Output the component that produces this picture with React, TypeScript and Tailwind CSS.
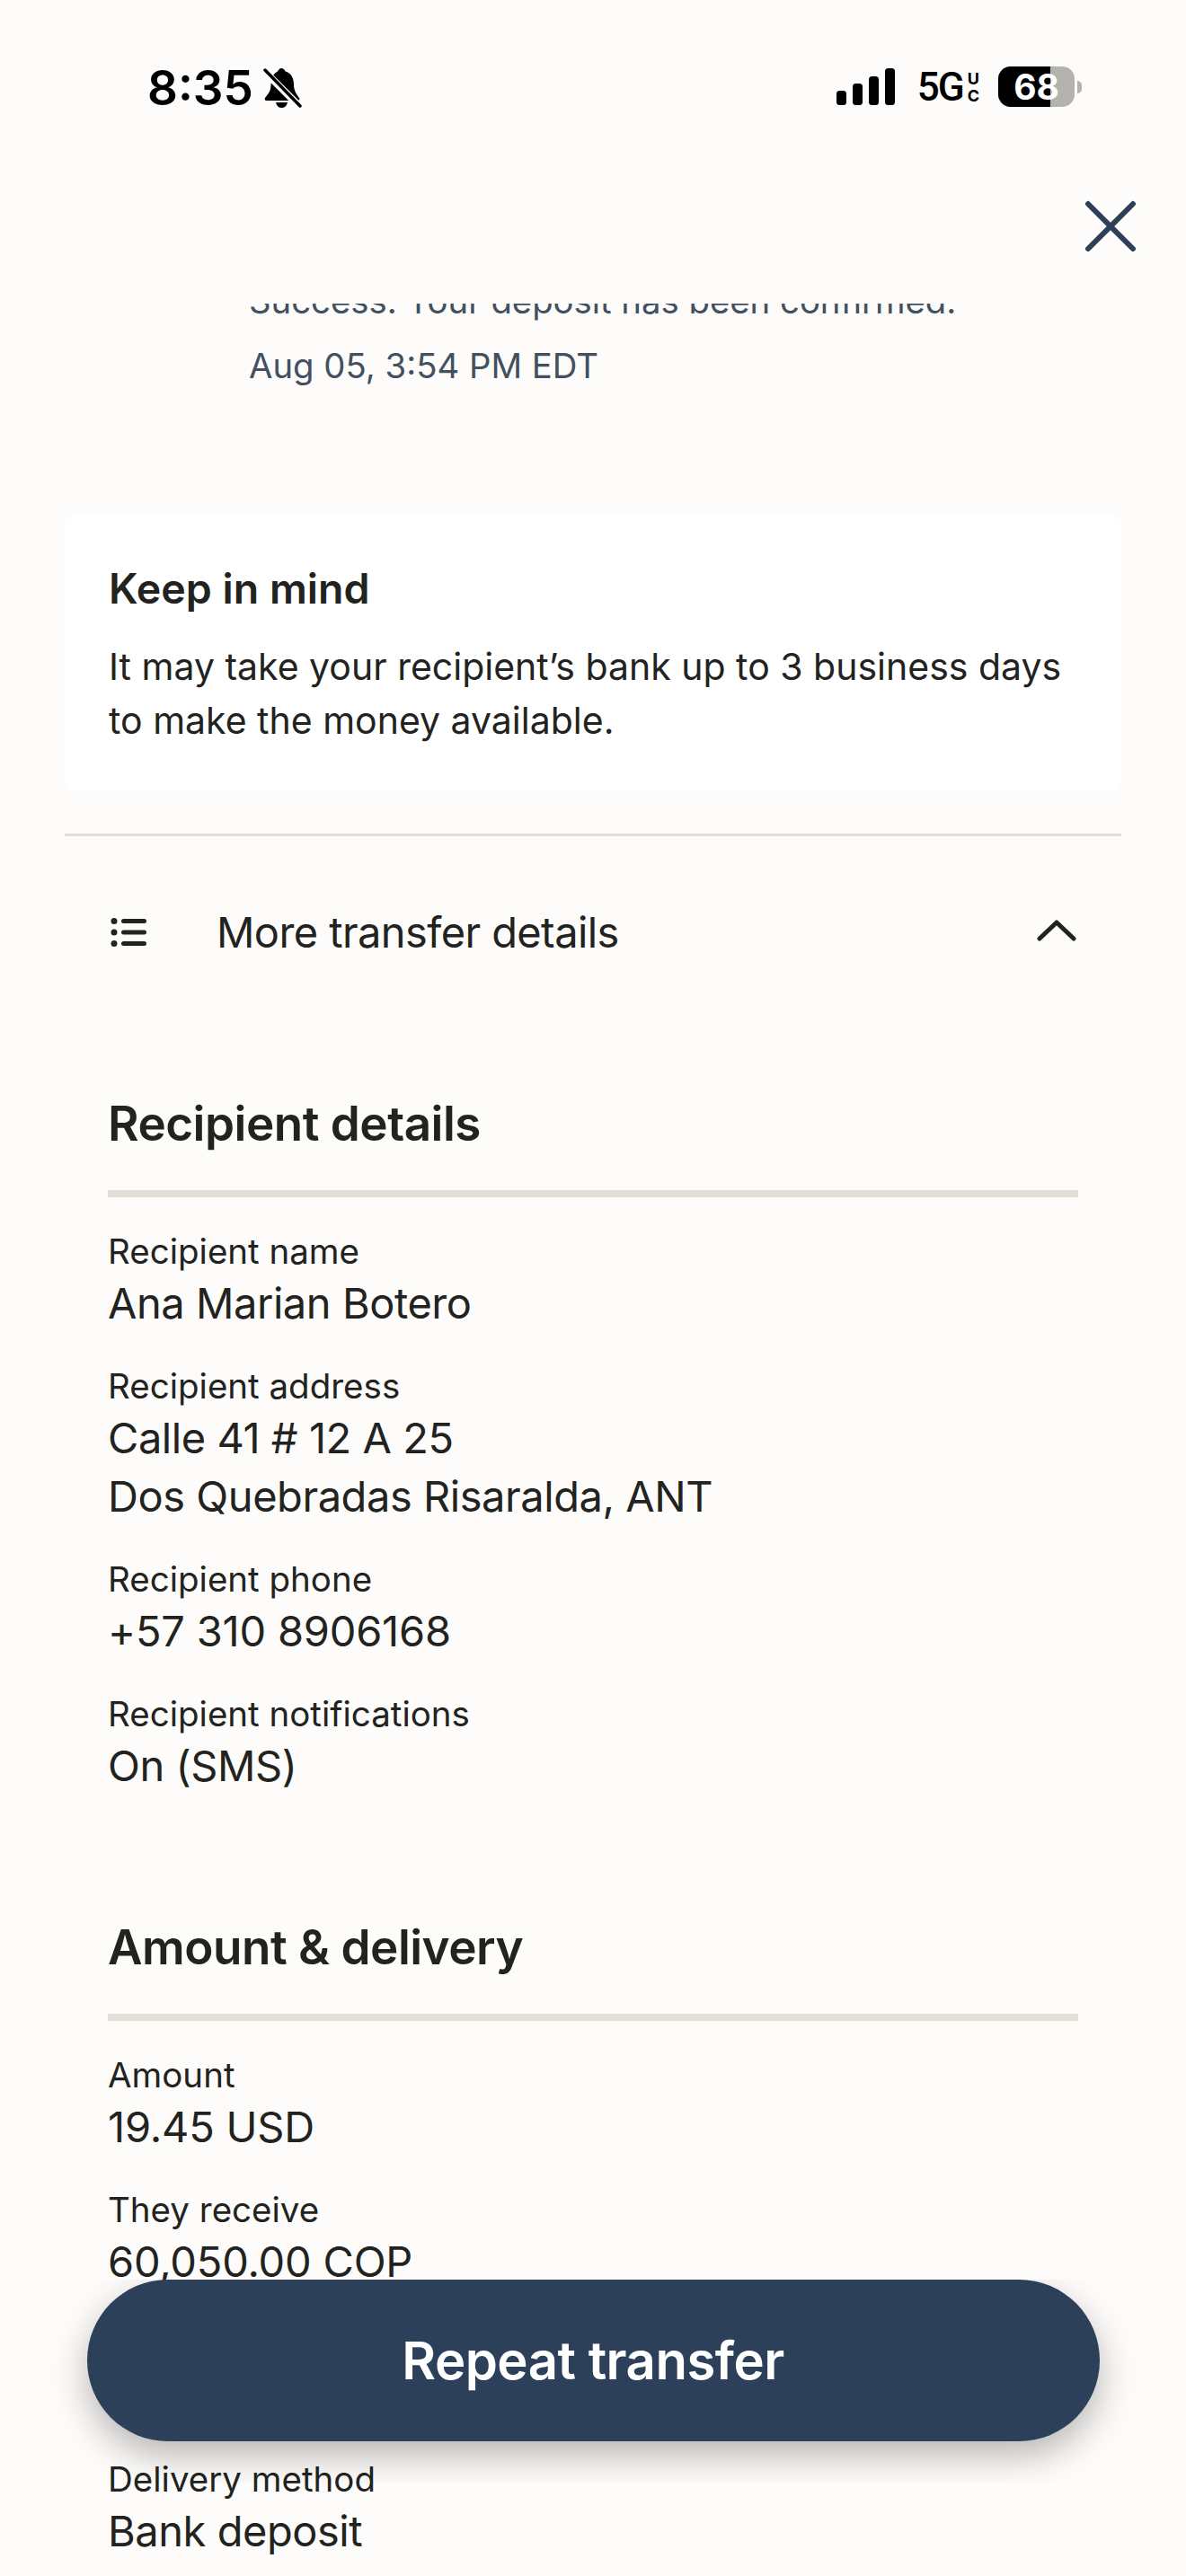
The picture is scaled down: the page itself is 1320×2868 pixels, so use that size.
import React from "react";

const font = "[font-family:Inter,'Noto_Sans',sans-serif]";

function Field({ label, lines, numeric }: { label: string; lines: string[]; numeric?: boolean }) {
  return (
    <div className="mb-[36px]">
      <div className="text-[38.5px] leading-[49px] text-[#22231f]">{label}</div>
      {lines.map((line) => (
        <div
          key={line}
          className={`text-[47px] leading-[65px] text-[#22231f] ${numeric ? "tracking-[-0.2px]" : "tracking-[-0.45px]"}`}
        >
          {line}
        </div>
      ))}
    </div>
  );
}

function SectionTitle({ title }: { title: string }) {
  return (
    <div>
      <h2 className="text-[53px] leading-[70px] font-semibold tracking-[-0.5px] text-[#22231f]">{title}</h2>
      <div className="mt-[39px] mb-[36px] h-[8px] bg-[#e1dfd6]" />
    </div>
  );
}

function StatusBar() {
  return (
    <div className="flex h-[190px] items-start justify-between pt-[72px] pr-[116px] pl-[164px]">
      <div className="flex items-center gap-[10px]">
        <span className="text-[53px] leading-[52px] font-semibold text-black">8:35</span>
        <svg width="44" height="46" viewBox="0 0 44 46">
          <path
            d="M21 1c2 0 4 1.500 4.500 3.500C32 6 35 12 35 19c0 7 3 11 6 15 1 2 0 3-2 3H5c-2 0-3-1-2-3 3-4 5-6 6-10l1-9c1-6 4-9 7-10.500C18 3 19 1 21 1z"
            fill="#000"
          />
          <path d="M15 39h13c-1 4-3 6-6.500 6S16 43 15 39z" fill="#000" />
          <path d="M2 4 L42 44" stroke="#fdfcfa" strokeWidth="8" />
          <path d="M3 3 L42 43" stroke="#000" strokeWidth="3.500" strokeLinecap="round" />
        </svg>
      </div>
      <div className="flex items-center pt-[2px]">
        <svg width="66" height="42" viewBox="0 0 66 42" className="mr-[24px]">
          <rect x="0" y="25" width="11" height="16" rx="3.500" fill="#000" />
          <rect x="18" y="17" width="11" height="24" rx="3.500" fill="#000" />
          <rect x="36" y="9" width="11" height="32" rx="3.500" fill="#000" />
          <rect x="54" y="0" width="11" height="41" rx="3.500" fill="#000" />
        </svg>
        <span className="text-[44px] leading-[44px] font-medium tracking-[-2px] text-black [font-family:Roboto,sans-serif]">
          5G
        </span>
        <span className="mr-[21px] ml-[5px] flex flex-col text-[18px] leading-[19px] font-bold text-black">
          <span>U</span>
          <span>C</span>
        </span>
        <div className="relative flex h-[45px] w-[85px] items-center justify-center overflow-hidden rounded-[14px] bg-[#b3b2af]">
          <div className="absolute inset-y-0 left-0 w-[58px] bg-black" />
          <span className="relative text-[39px] leading-[45px] font-bold text-white">68</span>
        </div>
        <div className="ml-[3px] h-[14px] w-[5px] rounded-r-full bg-[#b3b2af]" />
      </div>
    </div>
  );
}

export default function App() {
  return (
    <div className={`${font} relative flex h-[2868px] w-[1320px] flex-col overflow-hidden bg-[#fdfcfa]`}>
      <StatusBar />
      <div className="flex h-[148px] shrink-0 items-start justify-end pt-[32px] pr-[54px]">
        <svg width="60" height="60" viewBox="0 0 60 60">
          <path d="M5 5 L55 55 M55 5 L5 55" stroke="#2c405a" strokeWidth="6" strokeLinecap="round" />
        </svg>
      </div>

      <div className="min-h-0 flex-1 overflow-hidden">
        <div className="-mt-[33px] pl-[277px]">
          <p className="text-[38.300px] leading-[60px] text-[#42505f]">Success: Your deposit has been confirmed.</p>
          <p className="mt-[12px] text-[38.300px] leading-[60px] text-[#42505f]">Aug 05, 3:54 PM EDT</p>
        </div>

        <div className="mx-[72px] mt-[136px] flex h-[308px] flex-col rounded-[12px] bg-white px-[49px] pt-[52px]">
          <h3 className="text-[46.500px] leading-[60px] font-semibold text-[#22231f]">Keep in mind</h3>
          <p className="mt-[27px] text-[41px] leading-[60px] text-[#22231f]">
            It may take your recipient’s bank up to 3 business days
            <br />
            to make the money available.
          </p>
        </div>

        <div className="mx-[72px] mt-[47px] h-[3px] bg-[#e1dfd6]" />

        <div className="mx-[72px] flex h-[216px] items-center pb-[3px]">
          <svg width="40" height="32" viewBox="0 0 40 32" className="ml-[51px]">
            <circle cx="4" cy="3.500" r="3.500" fill="#22231f" />
            <circle cx="4" cy="16" r="3.500" fill="#22231f" />
            <circle cx="4" cy="28.500" r="3.500" fill="#22231f" />
            <path d="M14.500 3.500h23M14.500 16h23M14.500 28.500h23" stroke="#22231f" strokeWidth="5" strokeLinecap="round" />
          </svg>
          <span className="ml-[78px] flex-1 text-[47px] leading-[65px] tracking-[-0.6px] text-[#22231f]">
            More transfer details
          </span>
          <svg width="44" height="26" viewBox="0 0 44 26" className="mr-[50px] mb-[4px]">
            <path d="M3 22 L22 4 L41 22" fill="none" stroke="#22231f" strokeWidth="5" strokeLinecap="round" strokeLinejoin="round" />
          </svg>
        </div>

        <div className="mx-[120px] mt-[69px]">
          <SectionTitle title="Recipient details" />
          <Field label="Recipient name" lines={["Ana Marian Botero"]} />
          <Field label="Recipient address" lines={["Calle 41 # 12 A 25", "Dos Quebradas Risaralda, ANT"]} />
          <Field label="Recipient phone" lines={["+57 310 8906168"]} numeric />
          <Field label="Recipient notifications" lines={["On (SMS)"]} />

          <div className="mt-[135px]">
            <SectionTitle title="Amount & delivery" />
          </div>
          <Field label="Amount" lines={["19.45 USD"]} numeric />
          <Field label="They receive" lines={["60,050.00 COP"]} numeric />
          <div className="h-[150px]" />
          <Field label="Delivery method" lines={["Bank deposit"]} />
        </div>
      </div>

      {/* floating action, shadow gets clipped by its wrapper */}
      <div className="absolute inset-x-0 top-[2538px] h-[227px] overflow-hidden">
        <button className="mx-auto flex h-[180px] w-[1127px] items-center justify-center rounded-full bg-[#2c405a] text-[58px] font-semibold tracking-[-0.5px] text-white shadow-[0_16px_40px_rgba(0,0,0,0.28)]">
          Repeat transfer
        </button>
      </div>
    </div>
  );
}
